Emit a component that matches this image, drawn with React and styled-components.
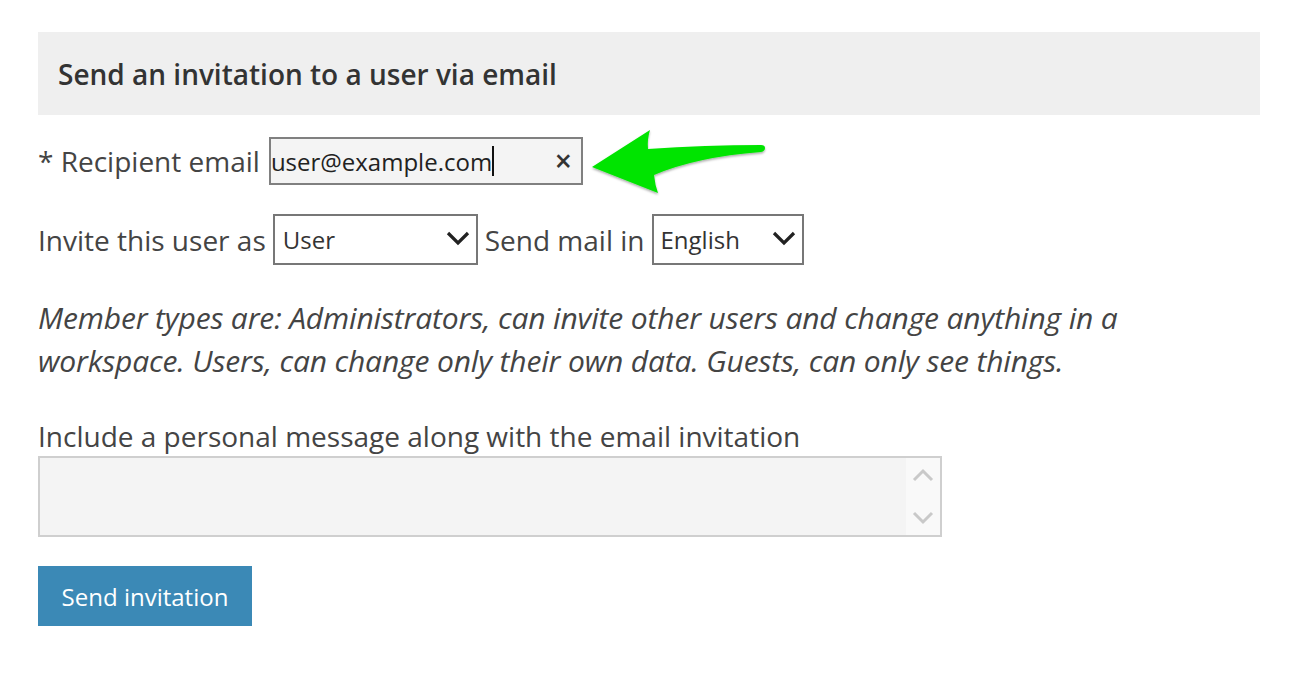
import React from "react";
import styled, { createGlobalStyle } from "styled-components";

const Global = createGlobalStyle`
  html, body { margin: 0; padding: 0; background: #fff; }
  body { font-family: "Open Sans", "Liberation Sans", sans-serif; color: #444; }
`;

const Page = styled.div`
  padding: 32px 46px 0 38px;
  display: flex;
  flex-direction: column;
`;

const Header = styled.div`
  background: #efefef;
  height: 83px;
  display: flex;
  align-items: center;
  padding-left: 20px;
  font-size: 28px;
  font-weight: 600;
  color: #333;
`;

const Row = styled.div`
  display: flex;
  align-items: center;
  margin-top: ${(p) => p.$mt}px;
  font-size: 28px;
  color: #444;
`;

const Label = styled.span`
  white-space: nowrap;
  margin-left: ${(p) => p.$ml || 0}px;
  margin-right: ${(p) => p.$mr || 0}px;
`;

const InputBox = styled.div`
  width: 314px;
  height: 48px;
  box-sizing: border-box;
  border: 2px solid #808080;
  background: #f4f4f4;
  display: flex;
  align-items: center;
  font-size: 24px;
  color: #222;
`;

const InputText = styled.span`
  padding-left: 0;
`;

const Caret = styled.span`
  display: inline-block;
  width: 2px;
  height: 30px;
  background: #111;
  margin-left: 0;
`;

const Clear = styled.span`
  margin-left: auto;
  margin-right: 9px;
  font-size: 30px;
  font-weight: 600;
  color: #333;
  line-height: 1;
`;

const Arrow = styled.svg`
  margin: -14px 0 -13px 3px;
  flex: none;
`;

const Select = styled.div`
  width: ${(p) => p.$w}px;
  height: 51px;
  box-sizing: border-box;
  border: 2px solid #777;
  background: #fff;
  display: flex;
  align-items: center;
  padding-left: ${(p) => p.$pl}px;
  padding-right: 5px;
  font-size: 24px;
  color: #333;
`;

const Chevron = styled.svg`
  margin-left: auto;
  margin-top: -4px;
`;

const Note = styled.p`
  margin: 31px 0 0 0;
  font-style: italic;
  font-size: 30px;
  line-height: 43px;
  letter-spacing: -0.15px;
  color: #444;
  max-width: 1100px;
`;

const MsgLabel = styled.div`
  margin-top: 39px;
  font-size: 28px;
  color: #444;
  line-height: 30px;
`;

const AreaBox = styled.div`
  margin-top: 5px;
  width: 904px;
  height: 81px;
  box-sizing: border-box;
  border: 2px solid #cfcfcf;
  background: #f4f4f4;
  display: flex;
`;

const Area = styled.textarea`
  flex: 1;
  border: none;
  background: transparent;
  resize: none;
  outline: none;
  font-family: inherit;
  font-size: 20px;
`;

const ScrollStrip = styled.div`
  width: 34px;
  background: #f9f9f9;
  display: flex;
  flex-direction: column;
  align-items: center;
  justify-content: space-between;
  padding: 9px 0 9px;
`;

const Button = styled.button`
  margin-top: 29px;
  align-self: flex-start;
  width: 214px;
  height: 60px;
  border: none;
  background: #3b89b6;
  color: #fff;
  font-family: inherit;
  font-size: 24px;
  padding: 0;
  cursor: pointer;
`;

const Down = () => (
  <Chevron width="26" height="16" viewBox="0 0 26 16">
    <path d="M3 3 L13 13 L23 3" fill="none" stroke="#222" strokeWidth="3.2" />
  </Chevron>
);

export default function App() {
  return (
    <>
      <Global />
      <Page>
        <Header>Send an invitation to a user via email</Header>

        <Row $mt={22}>
          <Label $mr={9}>* Recipient email</Label>
          <InputBox>
            <InputText>user@example.com</InputText>
            <Caret />
            <Clear>×</Clear>
          </InputBox>
          <Arrow width="185" height="75" viewBox="0 0 185 75">
            <defs>
              <filter id="sh" x="-10%" y="-10%" width="120%" height="130%">
                <feDropShadow dx="0" dy="1.5" stdDeviation="1.2" floodColor="#000" floodOpacity="0.35" />
              </filter>
            </defs>
            <path
              filter="url(#sh)"
              fill="#00e400"
              d="M6 44 L64 7 Q61 17 62 26 Q120 22 175 22 Q179 22 179 25 Q179 28 175 29 Q110 34 68 52 Q69 62 72 70 Z"
            />
          </Arrow>
        </Row>

        <Row $mt={29}>
          <Label $mr={7}>Invite this user as</Label>
          <Select $w={205} $pl={8}>
            User
            <Down />
          </Select>
          <Label $ml={7} $mr={7}>Send mail in</Label>
          <Select $w={152} $pl={7}>
            English
            <Down />
          </Select>
        </Row>

        <Note>
          Member types are: Administrators, can invite other users and change anything in a
          workspace. Users, can change only their own data. Guests, can only see things.
        </Note>

        <MsgLabel>Include a personal message along with the email invitation</MsgLabel>
        <AreaBox>
          <Area />
          <ScrollStrip>
            <svg width="24" height="16" viewBox="0 0 24 16">
              <path d="M3 13 L12 4 L21 13" fill="none" stroke="#c9c9c9" strokeWidth="3" />
            </svg>
            <svg width="24" height="16" viewBox="0 0 24 16">
              <path d="M3 3 L12 12 L21 3" fill="none" stroke="#c9c9c9" strokeWidth="3" />
            </svg>
          </ScrollStrip>
        </AreaBox>

        <Button>Send invitation</Button>
      </Page>
    </>
  );
}
